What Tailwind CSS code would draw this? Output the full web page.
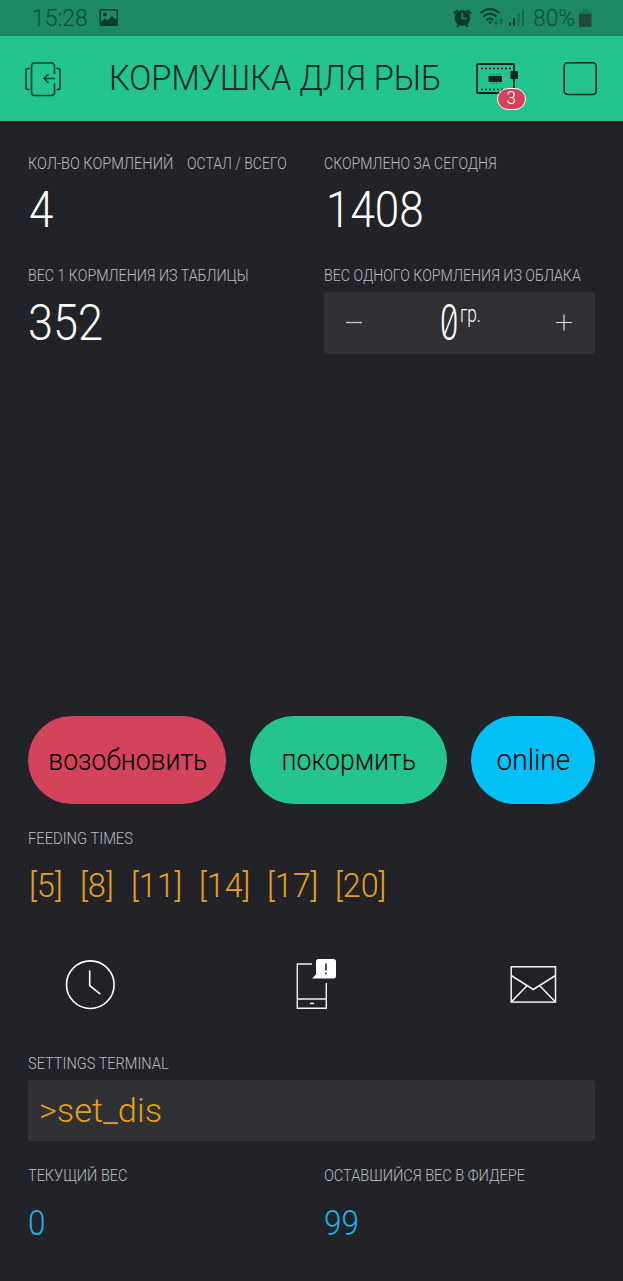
<!DOCTYPE html>
<html lang="ru">
<head>
<meta charset="utf-8">
<title>Кормушка для рыб</title>
<script src="https://cdn.jsdelivr.net/npm/@tailwindcss/browser@4"></script>
</head>
<body class="bg-[#222328] font-[Roboto,sans-serif] font-light">
<div class="flex h-[1281px] w-[623px] flex-col overflow-hidden bg-[#222328] whitespace-nowrap">

  <!-- Status bar -->
  <div class="flex h-9 shrink-0 justify-between bg-[#1b8a64] text-[23px] leading-[38px] text-[#0c4a36]">
    <div class="flex pl-[32px]">
      <span class="w-[67px] origin-left font-light text-[#0b4a35]">15:28</span>
      <svg class="h-9 w-5" viewBox="99 0 20 36"><path fill="#0c3a2b" fill-rule="evenodd" d="M101 9h15.500a1.500 1.500 0 0 1 1.500 1.500v14a1.500 1.500 0 0 1-1.500 1.500h-15.500a1.500 1.500 0 0 1-1.500-1.500v-14a1.500 1.500 0 0 1 1.500-1.500zM101 10.500V22l4-3.500 2.500 2 4.500-4.500 4.500 4v-9.500z"/><circle cx="105" cy="14.500" r="1.900" fill="#0c3a2b"/></svg>
    </div>
    <div class="flex">
      <svg class="h-9 w-[80px]" viewBox="453 0 80 36" fill="none" stroke="#0c3a2b">
        <circle cx="462.500" cy="18" r="7.800" fill="#0c3a2b" stroke="none"/>
        <path d="M454 13.500l4-3.500M471 13.500l-4-3.500M457 26.500l2.500-2.500M468 26.500l-2.500-2.500" stroke-width="2.200"/>
        <path d="M462.300 13v5.500h4" stroke="#1b8a64" stroke-width="1.700"/>
        <path d="M480.500 13q9.500-8 19 0M483.500 16.500q6.500-5.500 13 0M486.500 20q3.500-3 7 0" stroke-width="2"/>
        <circle cx="490" cy="22.500" r="1.400" fill="#0c3a2b" stroke="none"/>
        <path d="M496 19v5.500M494 22.500l2 2.200 2-2.200M501 24.500V19M499 21l2-2.200 2 2.200" stroke="#14694c" stroke-width="1.300"/>
        <path d="M510 22v4M514 18v8" stroke-width="2"/>
        <path d="M518.500 13.500V26M523 9.500V26" stroke="#15694c" stroke-width="2"/>
      </svg>
      <span class="w-[46px] origin-left scale-x-[.99] text-[#0f4f39]">80%</span>
      <svg class="mr-[31px] h-9 w-[13px]" viewBox="579 0 13 36"><path d="M583 9h5v2.500h-5zM579 11.500h12.500V15H579z" fill="#187554"/><path d="M579 14h12.500v12a1 1 0 0 1-1 1h-10.500a1 1 0 0 1-1-1z" fill="#20493a"/></svg>
    </div>
  </div>

  <!-- Title bar -->
  <div class="flex h-[85px] shrink-0 items-center bg-[#24c48e] text-[#10261f]">
    <svg class="ml-6 h-[85px] w-[38px]" viewBox="24 36 38 85" fill="none" stroke="#124032" stroke-width="1.600" stroke-linecap="round" stroke-linejoin="round">
      <path d="M54.500 73.500V66a3 3 0 0 0-3-3h-17a3 3 0 0 0-3 3v26.500a3 3 0 0 0 3 3h17a3 3 0 0 0 3-3V83.500"/>
      <path d="M54.500 78.500H44M48 74.500l-4 4 4 4M29 68.500h-1a2 2 0 0 0-2 2v17a2 2 0 0 0 2 2h1M57 68.500h1a2 2 0 0 1 2 2v17a2 2 0 0 1-2 2h-1"/>
    </svg>
    <h1 class="ml-[46.500px] w-[366.500px] origin-left scale-x-[.93] text-[35px] leading-[86px] font-light">КОРМУШКА ДЛЯ РЫБ</h1>
    <div class="relative h-[85px] w-[52px]">
      <svg class="h-[85px] w-[52px]" viewBox="475 36 52 85" fill="none" stroke="#10261f">
        <rect x="477" y="64" width="37" height="29" rx="1" stroke-width="1.800"/>
        <path d="M481 68.500h30M481 89.500h30" stroke-width="1.600" stroke-dasharray="2 2"/>
        <path d="M490.500 74.600h10M490.500 83.400h10" stroke-width="1.200" stroke="#147a59" stroke-dasharray="1.400 1.400"/>
        <path d="M488.500 76h13.500v6h-13.500zM510.500 71h7.500v8h-7.500z" fill="#10261f" stroke="none"/>
      </svg>
      <span class="absolute top-[51.500px] left-[22px] flex h-[22px] w-[29px] items-center justify-center rounded-full border-[1.500px] border-white bg-[#d3435c] text-[19px] text-white"><span class="scale-x-[.9]">3</span></span>
    </div>
    <svg class="ml-[36px] h-[85px] w-[36px]" viewBox="563 36 36 85" fill="none" stroke="#10261f" stroke-width="1.500"><rect x="564.200" y="62.700" width="32" height="31.800" rx="3.500"/></svg>
  </div>

  <!-- Readings -->
  <div class="grid h-[593px] shrink-0 grid-cols-[295.500px_271.500px] grid-rows-[112.500px_1fr] pt-8 pl-7">
    <div>
      <div class="flex pt-px text-[16px] leading-5 text-[#bcbdc0]">
        <span class="w-[159px] origin-left scale-x-[.908]">КОЛ-ВО КОРМЛЕНИЙ</span>
        <span class="origin-left scale-x-[.875]">ОСТАЛ / ВСЕГО</span>
      </div>
      <div class="mt-[6px] ml-px origin-left scale-x-[.88] text-[50px] leading-[60px] text-white">4</div>
    </div>
    <div>
      <div class="origin-left scale-x-[.881] pt-px text-[16px] leading-5 text-[#bcbdc0]">СКОРМЛЕНО ЗА СЕГОДНЯ</div>
      <div class="mt-[6px] ml-[2px] origin-left scale-x-[.88] text-[50px] leading-[60px] text-white">1408</div>
    </div>
    <div>
      <div class="origin-left scale-x-[.889] text-[16px] leading-5 text-[#bcbdc0]">ВЕС 1 КОРМЛЕНИЯ ИЗ ТАБЛИЦЫ</div>
      <div class="mt-[7px] origin-left scale-x-[.9] text-[50px] leading-[60px] text-white">352</div>
    </div>
    <div>
      <div class="origin-left scale-x-[.888] text-[16px] leading-5 text-[#bcbdc0]">ВЕС ОДНОГО КОРМЛЕНИЯ ИЗ ОБЛАКА</div>
      <div class="mt-[6.500px] flex h-[62px] rounded-[3px] bg-[#303134] text-white">
        <svg class="ml-[22px] h-[62px] w-4" viewBox="0 0 16 62" stroke="#c8c8c9" stroke-width="1.300"><path d="M0 30.500h16"/></svg>
        <div class="relative ml-[78.500px] w-[20px]">
          <div class="origin-left scale-x-[.66] text-[50px] leading-[62px]">0</div>
          <svg class="absolute top-0 left-0 h-[62px] w-5" viewBox="0 0 20 62" stroke="#fff" stroke-width="1.600"><path d="M4 44L14.500 17"/></svg>
        </div>
        <div class="w-[96px] origin-left scale-x-[.75] text-[23px] leading-[46px]">гр.</div>
        <svg class="h-[62px] w-4" viewBox="0 0 16 62" stroke="#e0e0e0" stroke-width="1.200"><path d="M0 30.500h16M8 22.500v16"/></svg>
      </div>
    </div>
  </div>

  <!-- Buttons -->
  <div class="mt-[1.500px] flex h-[88.500px] shrink-0 gap-6 pr-7 pl-7 text-[30px] font-light text-black">
    <div class="flex w-[197.500px] items-center justify-center rounded-full bg-[#d3435c]"><span class="translate-x-px scale-x-[.885]">возобновить</span></div>
    <div class="flex w-[197.500px] items-center justify-center rounded-full bg-[#24c48e]"><span class="translate-x-px scale-x-[.887]">покормить</span></div>
    <div class="flex flex-1 items-center justify-center rounded-full bg-[#04c0f8]"><span class="scale-x-[.935]">online</span></div>
  </div>

  <!-- Feeding times -->
  <div class="mt-[24.500px] pl-7 text-[16px] leading-5 text-[#bcbdc0]"><div class="origin-left scale-x-[.92]">FEEDING TIMES</div></div>
  <div class="mt-[16px] flex pl-[29px] text-[34px] leading-10 text-[#e8a01c]">
    <span class="w-[51px] origin-left scale-x-[.96]">[5]</span>
    <span class="w-[51px] origin-left scale-x-[.96]">[8]</span>
    <span class="w-[68px] origin-left scale-x-[.95]">[11]</span>
    <span class="w-[68px] origin-left scale-x-[.95]">[14]</span>
    <span class="w-[68px] origin-left scale-x-[.95]">[17]</span>
    <span class="w-[68px] origin-left scale-x-[.95]">[20]</span>
  </div>

  <!-- Widget icons -->
  <div class="mt-[51.500px] flex h-[56px] shrink-0 pl-[64px]">
    <svg class="h-14 w-[52px]" viewBox="64 956 52 56" fill="none" stroke="#fff" stroke-width="1.600" stroke-linecap="round" stroke-linejoin="round"><circle cx="90.300" cy="984.700" r="23.800"/><path d="M89.700 971v14.700l10 8"/></svg>
    <svg class="ml-[178px] h-14 w-[44px]" viewBox="294 956 44 56" fill="none" stroke="#f4f4f4" stroke-width="1.400">
      <path d="M312 964h-14.700v44.300h29V983M297.300 999h29M310 1003.500h4"/>
      <path d="M318.500 959h15a2.500 2.500 0 0 1 2.500 2.500v14.500a2.500 2.500 0 0 1-2.500 2.500H312l4-4v-13a2.500 2.500 0 0 1 2.500-2.500z" fill="#fff" stroke="none"/>
      <path d="M326 963.500v7M326 972.500v1.800" stroke="#222328" stroke-width="1.600"/>
    </svg>
    <svg class="ml-[170px] h-14 w-[50px]" viewBox="508 956 50 56" fill="none" stroke="#f4f4f4" stroke-width="1.500"><rect x="511.200" y="966.800" width="44.300" height="35.300"/><path d="M511.200 975.500l22.100 14 22.200-14M511.200 1002l16-16.500M555.500 1002l-16-16.500"/></svg>
  </div>

  <!-- Terminal -->
  <div class="mt-[42px] pl-7 text-[16px] leading-5 text-[#bcbdc0]"><div class="origin-left scale-x-[.91]">SETTINGS TERMINAL</div></div>
  <div class="mt-[6px] mr-7 ml-7 h-[61px] shrink-0 rounded-[3px] bg-[#303134] pl-[11px] text-[34px] leading-[61px] text-[#e8a01c]"><div class="origin-left scale-x-[1.010]">&gt;set_dis</div></div>

  <!-- Weights -->
  <div class="mt-[25px] grid grid-cols-[295.500px_271.500px] pl-7">
    <div>
      <div class="origin-left scale-x-[.904] text-[16px] leading-5 text-[#bcbdc0]">ТЕКУЩИЙ ВЕС</div>
      <div class="mt-[17px] w-5 origin-left scale-x-[.9] pt-px text-[35px] leading-10 text-[#1fb2e4]">0</div>
    </div>
    <div>
      <div class="origin-left scale-x-[.908] text-[16px] leading-5 text-[#bcbdc0]">ОСТАВШИЙСЯ ВЕС В ФИДЕРЕ</div>
      <div class="mt-[17px] origin-left scale-x-[.9] pt-px text-[35px] leading-10 text-[#1fb2e4]">99</div>
    </div>
  </div>
</div>
</body>
</html>
